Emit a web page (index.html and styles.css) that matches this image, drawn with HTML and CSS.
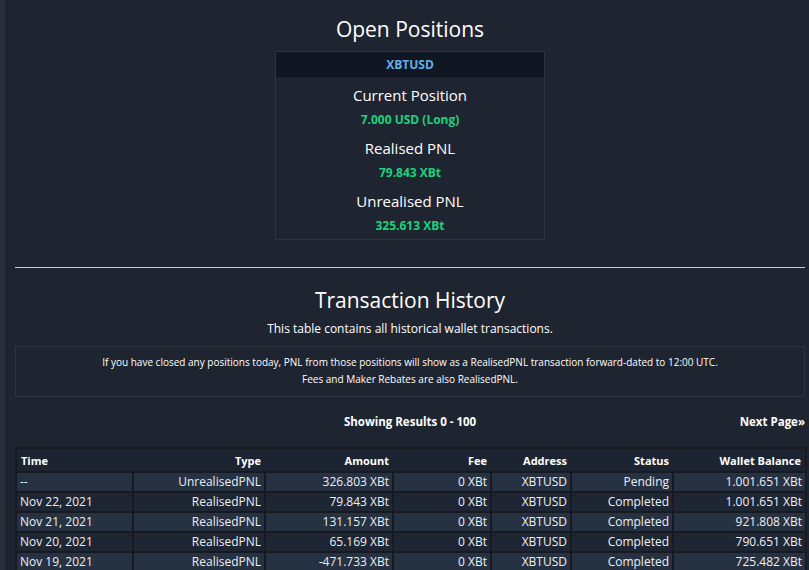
FILE: index.html
```html
<!DOCTYPE html>
<html lang="en">
<head>
    <meta charset="UTF-8">
    <meta name="viewport" content="width=device-width, initial-scale=1.0">
    <title>Wallet</title>
    <link rel="stylesheet" href="styles.css">
</head>
<body>
    <div class="page">
        <h1 class="title">Open Positions</h1>
        <div class="position-box">
            <div class="position-head">XBTUSD</div>
            <div class="position-body">
                <div class="stat">
                    <div class="stat-label">Current Position</div>
                    <div class="stat-value">7.000 USD (Long)</div>
                </div>
                <div class="stat">
                    <div class="stat-label">Realised PNL</div>
                    <div class="stat-value">79.843 XBt</div>
                </div>
                <div class="stat">
                    <div class="stat-label">Unrealised PNL</div>
                    <div class="stat-value">325.613 XBt</div>
                </div>
            </div>
        </div>

        <hr class="divider">

        <h1 class="title history-title">Transaction History</h1>
        <p class="subtitle">This table contains all historical wallet transactions.</p>
        <div class="note">
            If you have closed any positions today, PNL from those positions will show as a RealisedPNL transaction forward-dated to 12:00 UTC.<br>
            Fees and Maker Rebates are also RealisedPNL.
        </div>

        <div class="pager">
            <span class="pager-info">Showing Results 0 - 100</span>
            <a class="pager-next" href="#">Next Page&raquo;</a>
        </div>

        <table class="history">
            <colgroup>
                <col class="col-time">
                <col class="col-type">
                <col class="col-amount">
                <col class="col-fee">
                <col class="col-address">
                <col class="col-status">
                <col class="col-balance">
            </colgroup>
            <thead>
                <tr>
                    <th class="left">Time</th>
                    <th>Type</th>
                    <th>Amount</th>
                    <th>Fee</th>
                    <th>Address</th>
                    <th>Status</th>
                    <th>Wallet Balance</th>
                </tr>
            </thead>
            <tbody>
                <tr>
                    <td class="left">--</td>
                    <td>UnrealisedPNL</td>
                    <td>326.803 XBt</td>
                    <td>0 XBt</td>
                    <td>XBTUSD</td>
                    <td>Pending</td>
                    <td>1.001.651 XBt</td>
                </tr>
                <tr>
                    <td class="left">Nov 22, 2021</td>
                    <td>RealisedPNL</td>
                    <td>79.843 XBt</td>
                    <td>0 XBt</td>
                    <td>XBTUSD</td>
                    <td>Completed</td>
                    <td>1.001.651 XBt</td>
                </tr>
                <tr>
                    <td class="left">Nov 21, 2021</td>
                    <td>RealisedPNL</td>
                    <td>131.157 XBt</td>
                    <td>0 XBt</td>
                    <td>XBTUSD</td>
                    <td>Completed</td>
                    <td>921.808 XBt</td>
                </tr>
                <tr>
                    <td class="left">Nov 20, 2021</td>
                    <td>RealisedPNL</td>
                    <td>65.169 XBt</td>
                    <td>0 XBt</td>
                    <td>XBTUSD</td>
                    <td>Completed</td>
                    <td>790.651 XBt</td>
                </tr>
                <tr>
                    <td class="left">Nov 19, 2021</td>
                    <td>RealisedPNL</td>
                    <td>-471.733 XBt</td>
                    <td>0 XBt</td>
                    <td>XBTUSD</td>
                    <td>Completed</td>
                    <td>725.482 XBt</td>
                </tr>
            </tbody>
        </table>
    </div>
</body>
</html>
```

FILE: styles.css
```css
body {
    margin: 0;
    padding: 0;
    background-color: #1f2530;
    color: #fff;
    font-family: "Open Sans", Arial, sans-serif;
    border-left: 5px solid #28303c; /* side strip */
    height: 570px;
    overflow: hidden;
}
.page {
    padding: 14px 4px 0 10px;
}
.title {
    margin: 0;
    font-size: 21px;
    font-weight: 400;
    line-height: 30px;
    text-align: center;
}
.position-box {
    width: 268px;
    margin: 7px auto 0;
    border: 1px solid #30353d;
}
.position-head {
    background-color: #111722;
    color: #62b0e8;
    font-size: 12px;
    font-weight: 700;
    line-height: 25px;
    text-align: center;
}
.position-body {
    padding-top: 6px;
    text-align: center;
}
.stat {
    margin-bottom: 3px;
}
.stat:last-child {
    margin-bottom: 0;
}
.stat-label {
    font-size: 15px;
    line-height: 24px;
}
.stat-value {
    color: #1ad27c;
    font-size: 12px;
    font-weight: 700;
    line-height: 26px;
}
.divider {
    margin: 27px 0 0;
    border: 0;
    border-top: 1px solid #c8ccd0;
    height: 0;
}
.history-title {
    margin-top: 17px;
}
.subtitle {
    margin: 4px 0 0;
    font-size: 12px;
    line-height: 20px;
    text-align: center;
}
.note {
    margin-top: 7px;
    padding: 7px 0 8px;
    border: 1px solid #30353d;
    font-size: 10px;
    line-height: 17px;
    text-align: center;
}
.pager {
    position: relative;
    margin-top: 15px;
    font-size: 11.5px;
    font-weight: 700;
    line-height: 20px;
    text-align: center;
}
.pager-next {
    position: absolute;
    right: 0;
    top: 0;
    color: #fff;
    text-decoration: none;
}
.history {
    width: 100%;
    margin-top: 15px;
    table-layout: fixed;
    border-collapse: collapse;
    border: 2px solid #171b21;
    font-size: 12px;
}
.history th {
    background-color: #1c2331;
    font-size: 11px;
    font-weight: 700;
    height: 22px;
    padding: 0 4px;
    text-align: right;
}
.history td {
    height: 18px;
    padding: 0 3px;
    border: 2px solid #171b21;
    color: #eef0f3;
    text-align: right;
    line-height: 16px;
    white-space: nowrap;
}
.history tbody tr:nth-child(odd) td {
    background-color: #263142;
}
.history tbody tr:nth-child(even) td {
    background-color: #1e2533;
}
.history .left {
    text-align: left;
}
.col-time { width: 117px; }
.col-type { width: 132px; }
.col-amount { width: 128px; }
.col-fee { width: 98px; }
.col-address { width: 80px; }
.col-status { width: 102px; }
.col-balance { width: 133px; }
```
